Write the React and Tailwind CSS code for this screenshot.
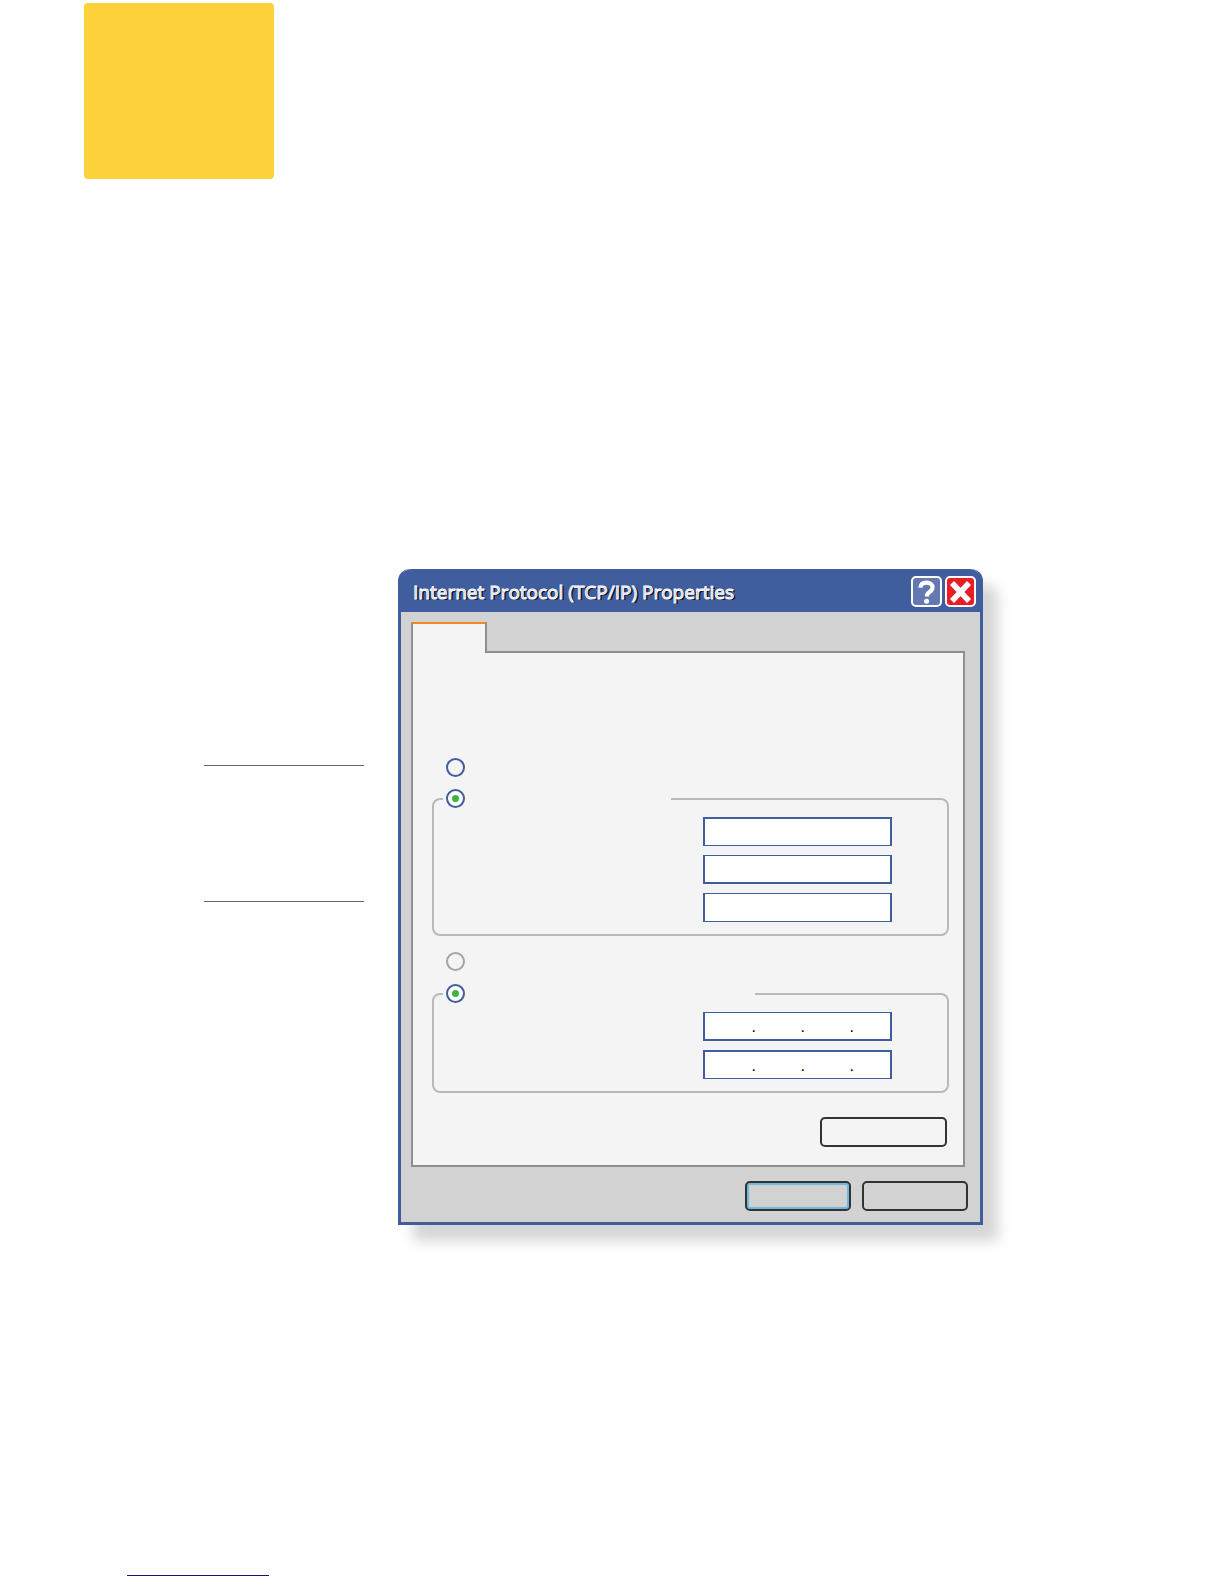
import { useState } from "react";
import clsx from "clsx";

const octets = [1, 2, 3, 4];

function Radio({ name, label, checked, onChange, muted }) {
  return (
    <input
      type="radio"
      name={name}
      aria-label={label}
      checked={checked}
      onChange={onChange}
      className={clsx(
        "grid size-[19px] appearance-none place-items-center rounded-full border-2",
        "checked:bg-white checked:before:size-[7px] checked:before:rounded-full checked:before:bg-[#3fb53c]",
        muted ? "border-[#a5a5a5]" : "border-[#405d9d]"
      )}
    />
  );
}

// Fieldset whose top border is broken by the radio in the legend
function Group({ radio, legendClass, children }) {
  return (
    <fieldset className="min-w-0 rounded-lg border-2 border-[#b9b9b9] pr-[55px] pb-3 pl-[9px]">
      <legend className={clsx("h-[19px] pl-[3px]", legendClass)}>{radio}</legend>
      <div className="flex flex-col items-end gap-[9px] pt-[9px]">{children}</div>
    </fieldset>
  );
}

function TextField({ label, className }) {
  return (
    <input
      type="text"
      aria-label={label}
      className={clsx(
        "h-[29px] w-[189px] border-x-2 border-[#405d9d] bg-white px-2 text-base outline-none",
        className
      )}
    />
  );
}

// Four octets separated by dots
function IpField({ label, className }) {
  return (
    <div
      role="group"
      aria-label={label}
      className={clsx(
        "flex h-[29px] w-[189px] items-center border-x-2 border-[#405d9d] bg-white pt-[2px] pl-[2px] text-base leading-5 text-black",
        className
      )}
    >
      {octets.map((n) => (
        <div key={n} className={clsx("flex items-center", n < 4 ? "w-[49px]" : "min-w-0 flex-1")}>
          <input
            type="text"
            maxLength={3}
            aria-label={`${label}, part ${n}`}
            className="w-full min-w-0 bg-transparent text-center outline-none"
          />
          {n < 4 && <span>.</span>}
        </div>
      ))}
    </div>
  );
}

function HelpIcon() {
  return (
    <svg viewBox="0 0 27 27" className="size-[27px]" fill="none" aria-hidden="true">
      <path
        d="M7.4 9.6C7.7 6 10.2 4.6 13.5 4.6c3.6 0 6 1.8 6 4.8 0 2.3-1.4 3.5-3.1 4.8-1.7 1.3-2.6 2.2-2.6 4.3"
        stroke="white"
        strokeWidth="4.2"
      />
      <circle cx="13.6" cy="23.2" r="2.5" fill="white" />
    </svg>
  );
}

function CloseIcon() {
  return (
    <svg viewBox="0 0 27 27" className="size-[27px]" aria-hidden="true">
      <path d="M5 5l17 18M22 5L5 23" stroke="white" strokeWidth="5.6" />
    </svg>
  );
}

function Dialog() {
  const [ipMode, setIpMode] = useState("manual");
  const [dnsMode, setDnsMode] = useState("manual");

  return (
    <section
      role="dialog"
      aria-labelledby="dialog-title"
      className="max-w-[585px] flex-1 rounded-t-xl border-3 border-t-0 border-[#405d9d] bg-[#d2d2d2] shadow-[15px_16px_14px_rgba(0,0,0,0.17)]"
    >
      <header className="-mx-px flex h-[43px] items-center justify-between rounded-t-xl bg-[#405d9d] pt-[2px] pr-[5px] pl-[13px]">
        <h1
          id="dialog-title"
          className="font-['Open_Sans',sans-serif] text-[19px] leading-6 font-medium text-[#8c9cc6] [-webkit-text-stroke:1px_white] [text-shadow:1px_1px_0_#10131f,2px_1px_0_#10131f]"
        >
          Internet Protocol (TCP/IP) Properties
        </h1>
        <div className="flex gap-[3px]">
          <button
            type="button"
            aria-label="Help"
            className="grid size-[31px] place-items-center rounded-[5px] border-2 border-white bg-[#6478b4]"
          >
            <HelpIcon />
          </button>
          <button
            type="button"
            aria-label="Close"
            className="grid size-[31px] place-items-center rounded-[5px] border-2 border-white bg-[#ea1c24]"
          >
            <CloseIcon />
          </button>
        </div>
      </header>

      <div className="pt-[10px] pr-[15px] pl-[10px]">
        <div role="tablist">
          <button
            type="button"
            role="tab"
            aria-selected="true"
            aria-label="General"
            className="relative -mb-[2px] block h-[31px] w-[76px] border-x-2 border-t-2 border-x-[#8e8e8e] border-t-[#ef8a22] bg-[#f4f4f4]"
          />
        </div>

        <div className="border-2 border-[#8e8e8e] bg-[#f4f4f4] pt-[105px] pr-[14px] pb-[18px] pl-[19px]">
          <div className="mb-3 flex pl-[14px]">
            <Radio
              name="ip"
              label="Obtain an IP address automatically"
              checked={ipMode === "auto"}
              onChange={() => setIpMode("auto")}
            />
          </div>
          <Group
            legendClass="w-[228px]"
            radio={
              <Radio
                name="ip"
                label="Use the following IP address"
                checked={ipMode === "manual"}
                onChange={() => setIpMode("manual")}
              />
            }
          >
            <TextField label="IP address" className="border-t-2 border-b" />
            <TextField label="Subnet mask" className="border-t border-b-2" />
            <TextField label="Default gateway" className="border-y" />
          </Group>

          <div className="mt-4 mb-[13px] flex pl-[14px]">
            <Radio
              name="dns"
              label="Obtain DNS server address automatically"
              checked={dnsMode === "auto"}
              onChange={() => setDnsMode("auto")}
              muted
            />
          </div>
          <Group
            legendClass="w-[312px]"
            radio={
              <Radio
                name="dns"
                label="Use the following DNS server addresses"
                checked={dnsMode === "manual"}
                onChange={() => setDnsMode("manual")}
              />
            }
          >
            <IpField label="Preferred DNS server" className="border-t border-b-2" />
            <IpField label="Alternate DNS server" className="border-t-2 border-b" />
          </Group>

          <div className="mt-6 flex justify-end pr-[2px]">
            <button
              type="button"
              aria-label="Advanced"
              className="h-[30px] w-[127px] rounded-[5px] border-2 border-[#333333]"
            />
          </div>
        </div>
      </div>

      <footer className="flex justify-end gap-[11px] pt-[14px] pr-3 pb-[11px]">
        <button
          type="button"
          aria-label="OK"
          className="h-[30px] w-[106px] rounded-[5px] border-2 border-[#333333] shadow-[inset_0_0_1px_2px_#6bb8dc]"
        />
        <button
          type="button"
          aria-label="Cancel"
          className="h-[30px] w-[106px] rounded-[5px] border-2 border-[#333333]"
        />
      </footer>
    </section>
  );
}

export default function App() {
  return (
    <div className="min-h-screen bg-white font-['Liberation_Sans',sans-serif]">
      <div className="pt-[3px] pl-[84px]">
        <div className="h-44 w-[190px] rounded bg-[#fdd13a]" />
      </div>

      <main className="mt-[390px] flex gap-[34px] pl-[204px]">
        <aside className="w-40 pt-[196px]">
          <hr className="border-t border-[#666666]" />
          <hr className="mt-[135px] border-t border-[#666666]" />
        </aside>
        <Dialog />
      </main>

      <footer className="pt-[340px] pb-2 pl-[127px]">
        <a href="#top" aria-label="Back to top" className="block h-[11px] w-[142px] border-b border-[#1b0f80]" />
      </footer>
    </div>
  );
}
